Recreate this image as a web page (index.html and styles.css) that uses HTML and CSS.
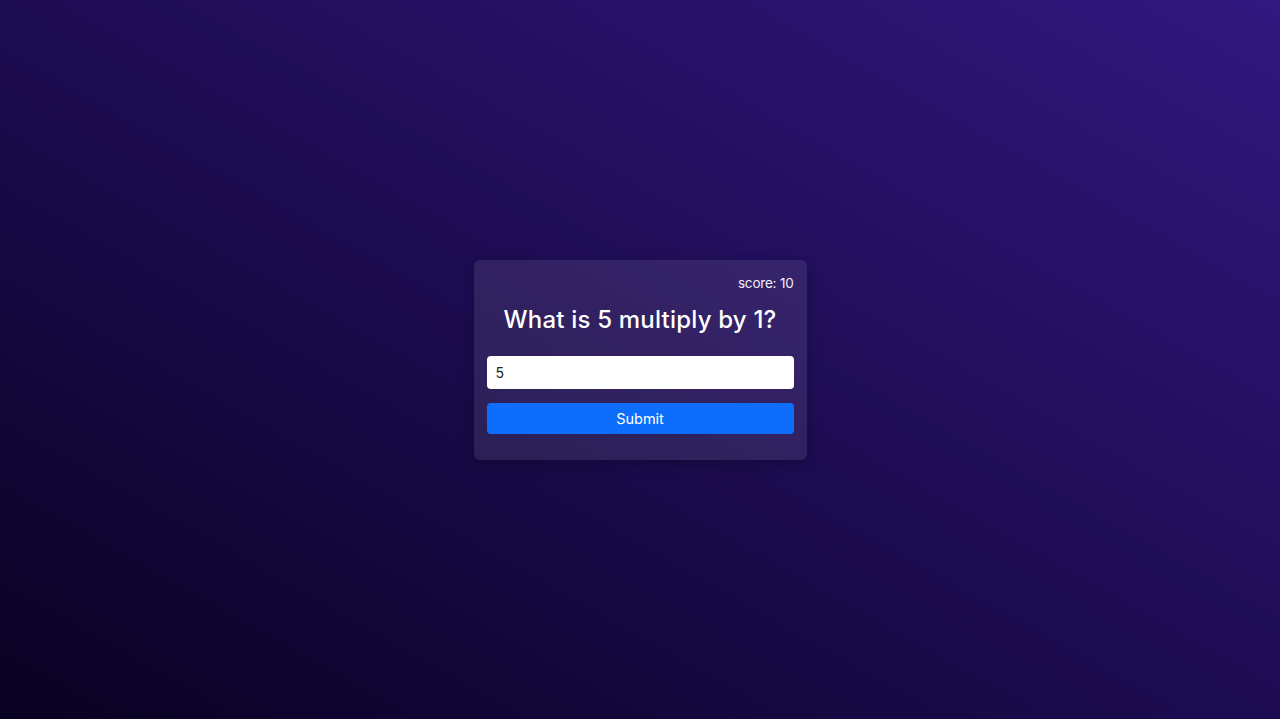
FILE: index.html
```html
<!DOCTYPE html>
<html lang="en">
<head>
<meta charset="utf-8">
<title>Quiz</title>
<link rel="stylesheet" href="styles.css">
</head>
<body>
<main class="page">
  <form class="card">
    <p class="score">score: 10</p>
    <h1 class="question">What is 5 multiply by 1?</h1>
    <input class="answer" type="text" value="5">
    <button class="submit" type="button">Submit</button>
  </form>
</main>
</body>
</html>
```
FILE: styles.css
```css
* { box-sizing: border-box; }
html, body { height: 100%; }
body {
  margin: 0;
  font-family: "Inter", "Noto Sans", sans-serif;
  background: linear-gradient(to top right, #090122 0%, #1d0c52 50%, #30187f 100%);
  color: #fff;
}
.page {
  height: 100%;
  display: flex;
  align-items: center;
  justify-content: center;
}
.card {
  width: 333px;
  padding: 13px 13px 26px;
  background: rgba(255, 255, 255, 0.09);
  border-radius: 6px;
  box-shadow: 0 4px 12px rgba(0, 0, 0, 0.25);
  display: flex;
  flex-direction: column;
}
.score {
  margin: 0;
  text-align: right;
  font-size: 13.5px;
  line-height: 20px;
  color: #f1eefa;
  letter-spacing: -0.2px;
}
.question {
  margin: 9px 0 18px;
  text-align: center;
  font-size: 24px;
  line-height: 36px;
  font-weight: 500;
  letter-spacing: 0.2px;
}
.answer {
  height: 33px;
  border: none;
  border-radius: 4px;
  padding: 0 9px;
  font-family: inherit;
  font-size: 14px;
  color: #222;
  background: #fff;
  outline: none;
}
.submit {
  margin-top: 14px;
  height: 31px;
  border: none;
  border-radius: 4px;
  background: #0d6efd;
  color: #fff;
  font-family: inherit;
  font-size: 14.5px;
}
```
